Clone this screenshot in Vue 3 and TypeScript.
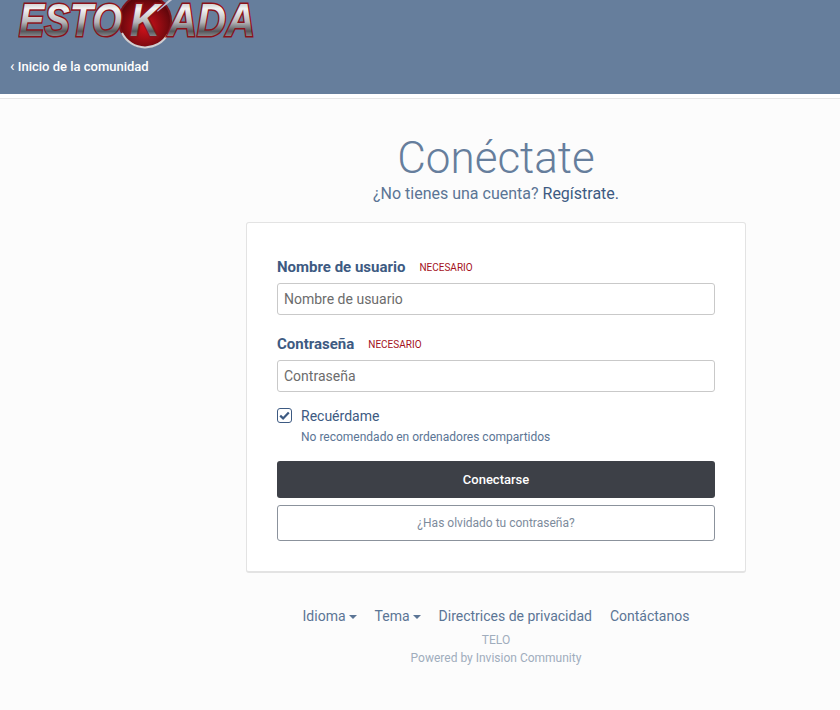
<script setup lang="ts">
import { ref } from 'vue';

const remember = ref(true);
const footerLinks = [
  { label: 'Idioma', caret: true },
  { label: 'Tema', caret: true },
  { label: 'Directrices de privacidad', caret: false },
  { label: 'Contáctanos', caret: false },
];
</script>

<template>
  <div class="page">
    <header class="header">
      <svg class="logo" width="240" height="52" viewBox="0 0 240 52" role="img" aria-label="Estokada">
        <defs>
          <linearGradient id="chrome" x1="0" y1="0" x2="0" y2="1">
            <stop offset="0" stop-color="#8c8d90" />
            <stop offset="0.3" stop-color="#f4f4f4" />
            <stop offset="0.55" stop-color="#b5b5b8" />
            <stop offset="0.72" stop-color="#55565b" />
            <stop offset="1" stop-color="#e6e6e8" />
          </linearGradient>
          <radialGradient id="ball" cx="0.5" cy="0.6" r="0.6">
            <stop offset="0" stop-color="#d5121b" />
            <stop offset="1" stop-color="#500509" />
          </radialGradient>
        </defs>
        <circle cx="127" cy="21" r="26" fill="url(#ball)" stroke="#7c1219" stroke-width="2" />
        <path d="M104 33 A26 26 0 0 0 150 34" fill="none" stroke="#d0d0d3" stroke-width="2" />
        <path d="M139 11 155 -2" fill="none" stroke="#c4c4d0" stroke-width="2" />
        <text class="logo-text" x="1" y="36" textLength="103" lengthAdjust="spacingAndGlyphs">ESTO</text>
        <text class="logo-text" x="112" y="36" textLength="30" lengthAdjust="spacingAndGlyphs">K</text>
        <text class="logo-text" x="150" y="36" textLength="87" lengthAdjust="spacingAndGlyphs">ADA</text>
      </svg>
      <a class="back-link"><span class="back-caret">‹</span> Inicio de la comunidad</a>
    </header>
    <div class="header-gap"></div>

    <main class="main">
      <h1 class="title">Conéctate</h1>
      <p class="subtitle">¿No tienes una cuenta? <a class="register">Regístrate.</a></p>

      <form class="card" @submit.prevent>
        <div class="field">
          <div class="label-row">
            <label class="label">Nombre de usuario</label>
            <span class="required">NECESARIO</span>
          </div>
          <input class="input" type="text" placeholder="Nombre de usuario" />
        </div>

        <div class="field">
          <div class="label-row">
            <label class="label">Contraseña</label>
            <span class="required">NECESARIO</span>
          </div>
          <input class="input" type="text" placeholder="Contraseña" />
        </div>

        <div class="remember" @click="remember = !remember">
          <span class="check">
            <svg v-if="remember" width="11" height="9" viewBox="0 0 11 9">
              <path d="M1.2 4.6 4.1 7.4 9.8 1.4" fill="none" stroke="#3d5a82" stroke-width="2.2" />
            </svg>
          </span>
          <div>
            <div class="remember-title">Recuérdame</div>
            <div class="remember-note">No recomendado en ordenadores compartidos</div>
          </div>
        </div>

        <button class="btn-primary" type="submit">Conectarse</button>
        <button class="btn-secondary" type="button">¿Has olvidado tu contraseña?</button>
      </form>

      <ul class="footer-links">
        <li v-for="link in footerLinks" :key="link.label" class="footer-link">
          {{ link.label }}<span v-if="link.caret" class="caret"></span>
        </li>
      </ul>
      <div class="footer-note">TELO</div>
      <div class="footer-note">Powered by Invision Community</div>
    </main>
  </div>
</template>

<style>
html,
body {
  background: #fcfcfc;
}
</style>

<style scoped>
.page {
  min-height: 710px;
  font-family: Roboto, "Liberation Sans", sans-serif;
  background: #fcfcfc;
  overflow: hidden;
}

.header {
  height: 94px;
  background: #667e9c;
  box-sizing: border-box;
  padding-left: 10px;
  display: flex;
  flex-direction: column;
  align-items: flex-start;
}

.logo {
  display: block;
  margin-left: 8px;
  flex: none;
}

.logo-text {
  font-family: "Liberation Sans", sans-serif;
  font-weight: 700;
  font-style: italic;
  font-size: 47px;
  fill: url(#chrome);
  stroke: #8a1219;
  stroke-width: 3px;
  paint-order: stroke;
}

.back-link {
  margin-top: 6px;
  color: #fff;
  font-size: 13px;
  font-weight: 500;
  line-height: 16px;
}

.back-caret {
  font-size: 15px;
  font-weight: 400;
}

.header-gap {
  height: 4px;
  background: #fff;
  border-bottom: 1px solid #e6e6e6;
}

.main {
  width: 500px;
  margin-left: 246px;
  text-align: center;
}

.title {
  margin: 32px 0 0;
  font-size: 44px;
  font-weight: 300;
  line-height: 54px;
  color: #667e9c;
}

.subtitle {
  margin: -2px 0 0;
  font-size: 16px;
  line-height: 22px;
  color: #5b7595;
}

.register {
  color: #3d5a82;
}

.card {
  margin-top: 17px;
  box-sizing: border-box;
  height: 351px;
  padding: 34px 30px 0;
  background: #fff;
  border: 1px solid #e3e3e3;
  border-bottom: 2px solid #e3e3e3;
  border-radius: 3px;
  text-align: left;
}

.field {
  margin-bottom: 14px;
}

.field + .field {
  margin-top: 19px;
}

.label-row {
  display: flex;
  align-items: center;
  gap: 14px;
  height: 20px;
  margin-bottom: 6px;
}

.label {
  font-size: 15px;
  font-weight: 700;
  color: #3d5a82;
}

.required {
  font-size: 10px;
  color: #a4111c;
}

.input {
  display: block;
  width: 100%;
  box-sizing: border-box;
  height: 32px;
  padding: 0 6px;
  font-family: inherit;
  font-size: 14px;
  border: 1px solid #c9c9c9;
  border-radius: 3px;
  background: #fff;
}

.input::placeholder {
  color: #6c6c6c;
  opacity: 1;
}

.remember {
  display: flex;
  gap: 9px;
  cursor: pointer;
}

.check {
  flex: none;
  width: 15px;
  height: 15px;
  box-sizing: border-box;
  margin-top: 2px;
  display: flex;
  align-items: center;
  justify-content: center;
  border: 1px solid #3d5a82;
  border-radius: 3px;
  background: #fff;
}

.remember-title {
  font-size: 14px;
  line-height: 20px;
  color: #3d5a82;
}

.remember-note {
  margin-top: 2px;
  font-size: 12px;
  line-height: 18px;
  color: #5b7595;
}

.btn-primary,
.btn-secondary {
  display: block;
  width: 100%;
  box-sizing: border-box;
  font-family: inherit;
  border-radius: 3px;
}

.btn-primary {
  height: 37px;
  margin-top: 15px;
  font-size: 13px;
  font-weight: 500;
  color: #fff;
  background: #3d4047;
  border: none;
}

.btn-secondary {
  height: 36px;
  margin-top: 7px;
  font-size: 12px;
  color: #7d8b9c;
  background: #fff;
  border: 1px solid #8b929c;
}

.footer-links {
  list-style: none;
  display: flex;
  justify-content: center;
  gap: 18px;
  margin: 33px 0 0;
  padding: 0;
  font-size: 14px;
  line-height: 20px;
  color: #5b7595;
}

.caret {
  display: inline-block;
  margin-left: 3px;
  vertical-align: middle;
  border-top: 4px solid #5b7595;
  border-left: 4.5px solid transparent;
  border-right: 4.5px solid transparent;
}

.footer-note {
  font-size: 12px;
  line-height: 18px;
  color: #a0adbd;
}

.footer-links + .footer-note {
  margin-top: 5px;
}
</style>
